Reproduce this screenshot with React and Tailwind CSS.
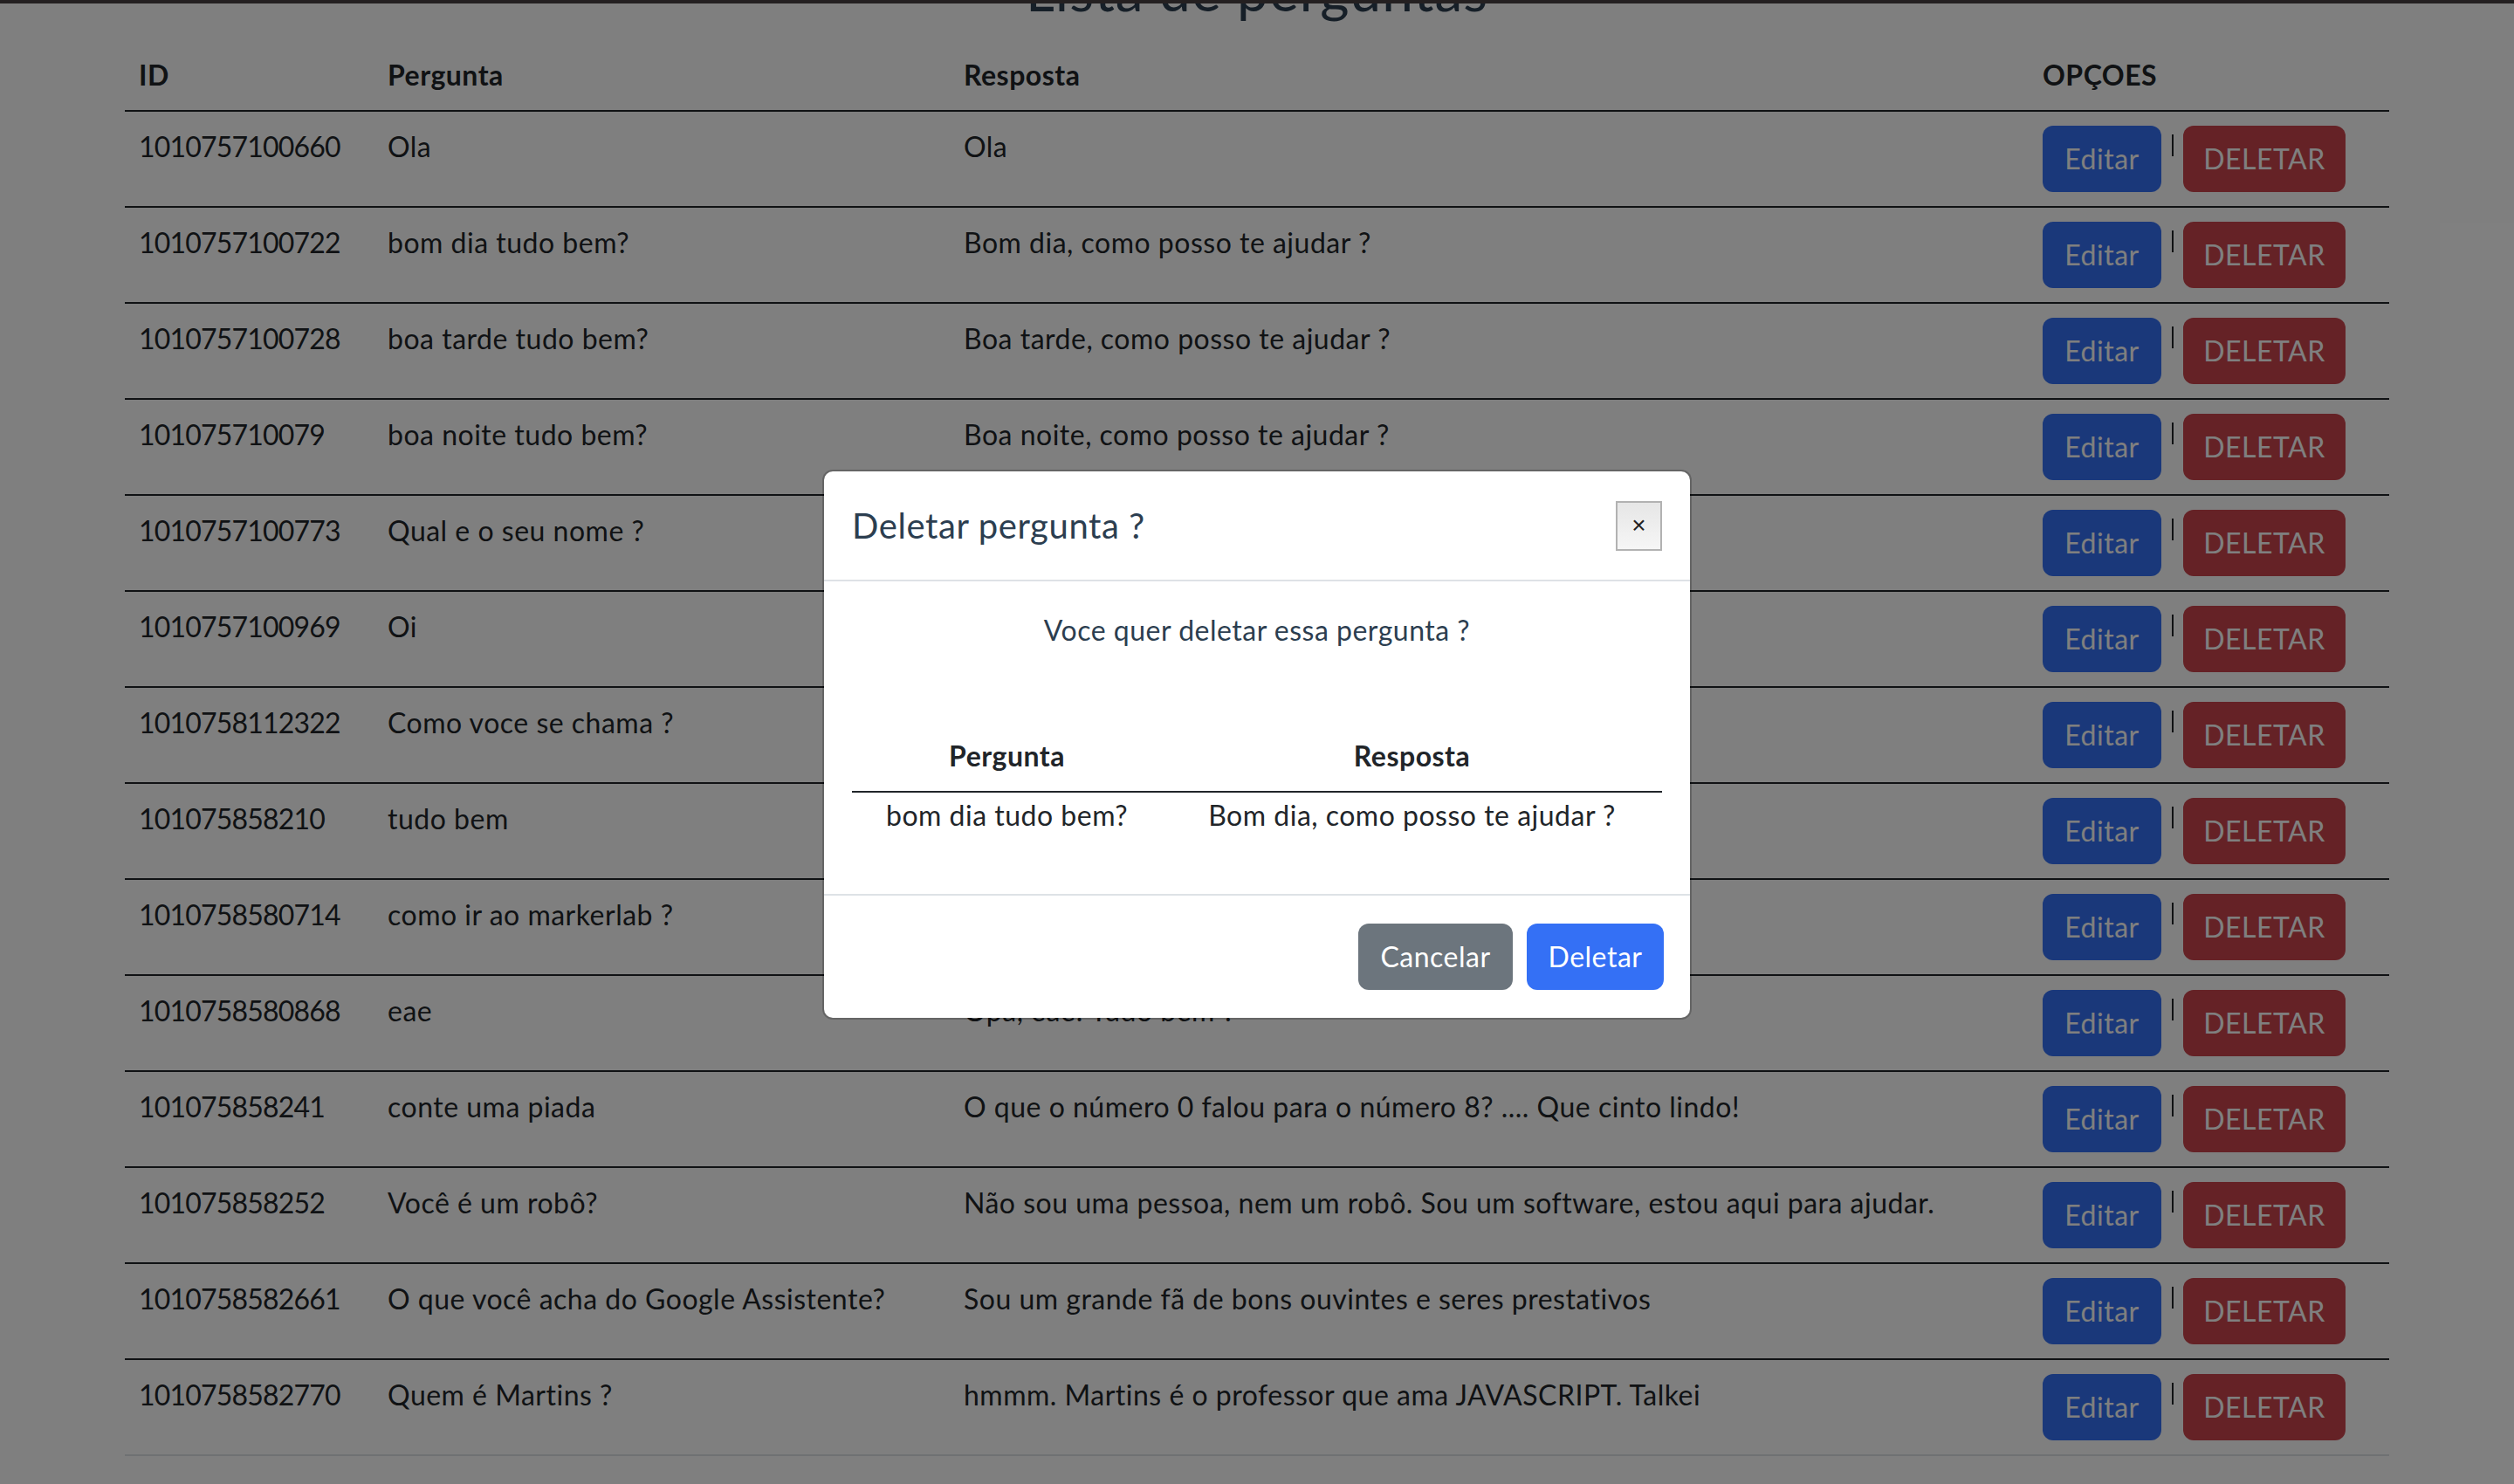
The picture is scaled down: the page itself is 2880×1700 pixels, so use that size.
import React from 'react';

const PERGUNTAS = [
  { id: '1010757100660', p: 'Ola', r: 'Ola' },
  { id: '1010757100722', p: 'bom dia tudo bem?', r: 'Bom dia, como posso te ajudar ?' },
  { id: '1010757100728', p: 'boa tarde tudo bem?', r: 'Boa tarde, como posso te ajudar ?' },
  { id: '101075710079', p: 'boa noite tudo bem?', r: 'Boa noite, como posso te ajudar ?' },
  { id: '1010757100773', p: 'Qual e o seu nome ?', r: 'Meu nome é Bot' },
  { id: '1010757100969', p: 'Oi', r: 'Olá !' },
  { id: '1010758112322', p: 'Como voce se chama ?', r: 'Me chamo Bot' },
  { id: '101075858210', p: 'tudo bem', r: 'Tudo sim !' },
  { id: '1010758580714', p: 'como ir ao markerlab ?', r: 'Siga em frente' },
  { id: '1010758580868', p: 'eae', r: 'Opa, eae! Tudo bem ?' },
  { id: '101075858241', p: 'conte uma piada', r: 'O que o número 0 falou para o número 8? .... Que cinto lindo!' },
  { id: '101075858252', p: 'Você é um robô?', r: 'Não sou uma pessoa, nem um robô. Sou um software, estou aqui para ajudar.' },
  { id: '1010758582661', p: 'O que você acha do Google Assistente?', r: 'Sou um grande fã de bons ouvintes e seres prestativos' },
  { id: '1010758582770', p: 'Quem é Martins ?', r: 'hmmm. Martins é o professor que ama JAVASCRIPT. Talkei' },
];

const Row = ({ item, last }) => (
  <tr className={last ? 'border-b-2 border-[#dee2e6]' : 'border-b-2 border-[#212529]'}>
    <td className="p-[16px] align-top tracking-[-0.8px]">{item.id}</td>
    <td className="p-[16px] align-top">{item.p}</td>
    <td className="p-[16px] align-top">{item.r}</td>
    <td className="p-[16px] align-top">
      <div className="flex items-start">
        <button className="h-[76px] w-[136px] rounded-[12px] bg-[#3470f5] text-white">Editar</button>
        <span className="ml-[12px] mr-[11px] mt-[10px] h-[25px] w-[2px] bg-[#212529]" />
        <button className="h-[76px] w-[186px] rounded-[12px] bg-[#ca444c] text-white">DELETAR</button>
      </div>
    </td>
  </tr>
);

const DeleteModal = () => (
  <div className="mt-[538px] h-fit w-[996px] rounded-[12px] border-2 border-black/20 bg-white bg-clip-padding text-[#2c3e50]">
    {/* header */}
    <div className="flex items-center justify-between border-b-2 border-[#dee2e6] px-[32px] py-[32px]">
      <h5 className="text-[40px] leading-[60px] tracking-[0.6px]">Deletar pergunta ?</h5>
      <button className="flex h-[57px] w-[53px] items-center justify-center border-2 border-[#b2b2b2] bg-gradient-to-b from-[#e6e6e6] to-[#f6f6f6] font-['Liberation_Sans',sans-serif] text-[28px] tracking-normal text-[#222]">
        ×
      </button>
    </div>

    {/* body */}
    <div className="p-[32px] text-center text-[32px] leading-[48px]">
      <p className="mb-[32px]">Voce quer deletar essa pergunta ?</p>
      <br />
      <table className="w-full text-[#212529]">
        <thead>
          <tr className="border-b-2 border-[#212529]">
            <th className="p-[16px] font-bold">Pergunta</th>
            <th className="p-[16px] font-bold">Resposta</th>
          </tr>
        </thead>
        <tbody>
          <tr>
            <td className="px-[16px] pb-[34px] pt-[2px]">bom dia tudo bem?</td>
            <td className="px-[16px] pb-[34px] pt-[2px]">Bom dia, como posso te ajudar ?</td>
          </tr>
        </tbody>
      </table>
    </div>

    {/* footer */}
    <div className="flex justify-end gap-[16px] border-t-2 border-[#dee2e6] p-[32px] pr-[30px] text-[32px]">
      <button className="h-[76px] w-[177px] rounded-[12px] bg-[#6c757d] text-white">Cancelar</button>
      <button className="h-[76px] w-[157px] rounded-[12px] bg-[#3470f5] text-white">Deletar</button>
    </div>
  </div>
);

export default function App() {
  return (
    <div className="relative h-[1700px] overflow-hidden bg-white font-['Lato',sans-serif] tracking-[0.5px]">
      <div className="-mt-[50px] text-center text-[#2c3e50]">
        <h2 className="mb-[19px] text-[64px] leading-[77px] tracking-[1px]">Lista de perguntas</h2>

        <div className="px-[143px]">
          <table className="w-full table-fixed text-left text-[32px] leading-[48px] text-[#212529]">
            <colgroup>
              <col className="w-[285px]" />
              <col className="w-[660px]" />
              <col className="w-[1236px]" />
              <col className="w-[413px]" />
            </colgroup>
            <thead>
              <tr className="border-b-2 border-[#212529]">
                <th className="p-[16px] font-bold">ID</th>
                <th className="p-[16px] font-bold">Pergunta</th>
                <th className="p-[16px] font-bold">Resposta</th>
                <th className="p-[16px] font-bold">OPÇOES</th>
              </tr>
            </thead>
            <tbody>
              {PERGUNTAS.map((item, i) => (
                <Row key={item.id} item={item} last={i === PERGUNTAS.length - 1} />
              ))}
            </tbody>
          </table>
        </div>
      </div>

      {/* backdrop + modal */}
      <div className="absolute inset-0 z-10 flex justify-center bg-black/50">
        <DeleteModal />
      </div>

      <div className="absolute inset-x-0 top-0 z-20 h-[4px] bg-[#242021]" />
    </div>
  );
}
